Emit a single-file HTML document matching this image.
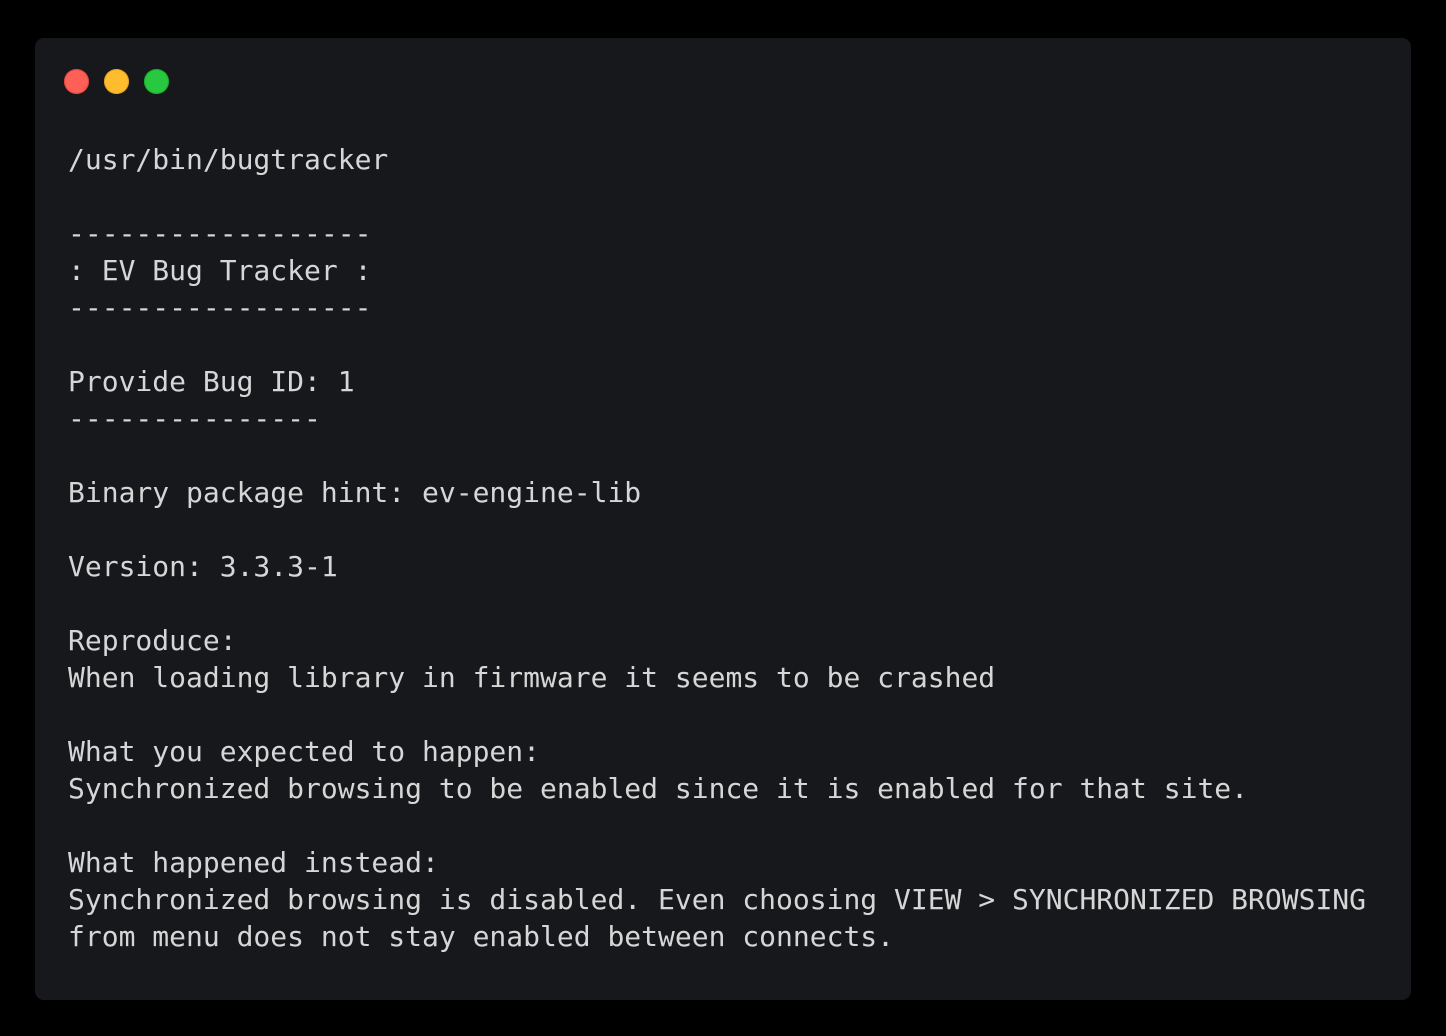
<!DOCTYPE html>
<html><head><style>
html,body{margin:0;padding:0;background:#000;width:1446px;height:1036px;overflow:hidden}
.win{position:absolute;left:35px;top:38px;width:1376px;height:962px;background:#17181b;border-radius:9px}
.d{position:absolute;top:31px;width:25px;height:25px;border-radius:50%}
pre{position:absolute;left:33px;top:103px;margin:0;font-family:"DejaVu Sans Mono",monospace;font-size:28px;line-height:37px;color:#d6d6d6}
</style></head><body>
<div class="win">
<div class="d" style="left:29px;background:#fe5f57;box-shadow:inset 0 0 0 1px #e0443e"></div>
<div class="d" style="left:69px;background:#febc2e;box-shadow:inset 0 0 0 1px #dea123"></div>
<div class="d" style="left:109px;background:#28c840;box-shadow:inset 0 0 0 1px #1aab29"></div>
<pre>/usr/bin/bugtracker

------------------
: EV Bug Tracker :
------------------

Provide Bug ID: 1
---------------

Binary package hint: ev-engine-lib

Version: 3.3.3-1

Reproduce:
When loading library in firmware it seems to be crashed

What you expected to happen:
Synchronized browsing to be enabled since it is enabled for that site.

What happened instead:
Synchronized browsing is disabled. Even choosing VIEW &gt; SYNCHRONIZED BROWSING
from menu does not stay enabled between connects.</pre>
</div>
</body></html>
